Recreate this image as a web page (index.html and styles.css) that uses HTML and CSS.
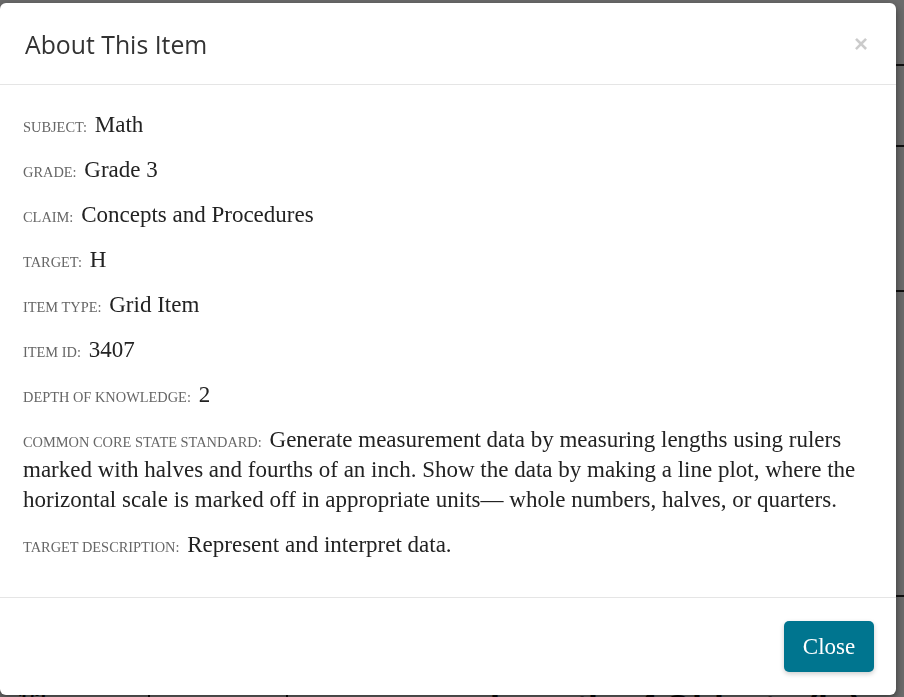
FILE: index.html
```html
<!DOCTYPE html>
<html lang="en">
<head>
<meta charset="utf-8">
<title>About This Item</title>
<link rel="stylesheet" href="styles.css">
</head>
<body>
<div class="page">
  <div class="page-rule r1"></div>
  <div class="page-rule r2"></div>
  <div class="page-rule r3"></div>
  <div class="page-rule r4"></div>
  <div class="page-bottom">
    <span class="page-cell c1">1/2</span>
    <span class="page-cell c2"></span>
    <span class="page-title">Length of Objects (in)</span>
  </div>
</div>
<div class="overlay"></div>
<div class="modal" role="dialog" aria-labelledby="modal-title">
  <div class="modal-header">
    <h4 class="modal-title" id="modal-title">About This Item</h4>
    <button class="modal-x" type="button" aria-label="Close">&times;</button>
  </div>
  <div class="modal-body">
    <p class="row"><span class="label">Subject:</span> Math</p>
    <p class="row"><span class="label">Grade:</span> Grade 3</p>
    <p class="row"><span class="label">Claim:</span> Concepts and Procedures</p>
    <p class="row"><span class="label">Target:</span> H</p>
    <p class="row"><span class="label">Item Type:</span> Grid Item</p>
    <p class="row"><span class="label">Item ID:</span> 3407</p>
    <p class="row"><span class="label">Depth of Knowledge:</span> 2</p>
    <p class="row"><span class="label">Common Core State Standard:</span> Generate measurement data by measuring lengths using rulers marked with halves and fourths of an inch. Show the data by making a line plot, where the horizontal scale is marked off in appropriate units— whole numbers, halves, or quarters.</p>
    <p class="row"><span class="label">Target Description:</span> Represent and interpret data.</p>
  </div>
  <div class="modal-footer">
    <button class="btn-close" type="button">Close</button>
  </div>
</div>
</body>
</html>
```
FILE: styles.css
```css
* { box-sizing: border-box; }
html, body { margin: 0; padding: 0; }
body {
  width: 904px;
  height: 697px;
  overflow: hidden;
  background: #ffffff;
  font-family: "Liberation Serif", serif;
  position: relative;
}
.page { position: absolute; inset: 0; background: #f4f4f4; }
.page-rule { position: absolute; left: 0; right: 0; height: 2px; background: #222; }
.r1 { top: 64px; }
.r2 { top: 145px; }
.r3 { top: 290px; }
.r4 { top: 595px; }
.page-bottom { position: absolute; left: 0; right: 0; top: 688px; height: 40px; }
.page-cell { position: absolute; top: 0; height: 40px; border-right: 2px solid #111; }
.c1 { left: 0; width: 150px; font: bold 20px "Liberation Sans", sans-serif; padding-left: 18px; color: #111; }
.c2 { left: 150px; width: 138px; }
.page-title { position: absolute; left: 490px; top: 0; font: bold 36px "Liberation Sans", sans-serif; color: #111; }
.overlay { position: fixed; inset: 0; background: rgba(0, 0, 0, 0.56); }

.modal {
  position: fixed;
  left: 0;
  top: 3px;
  width: 896px;
  background: #fff;
  border-radius: 6px;
  box-shadow: 0 3px 9px rgba(0, 0, 0, 0.5);
  display: flex;
  flex-direction: column;
}
.modal-header {
  height: 82px;
  border-bottom: 1px solid #e5e5e5;
  display: flex;
  align-items: center;
  justify-content: space-between;
  padding: 0 28px 0 25px;
}
.modal-title {
  margin: 0;
  font-family: "Open Sans", sans-serif;
  font-weight: 400;
  font-size: 24.8px;
  color: #333;
  line-height: 1;
  padding-top: 2px;
}
.modal-x {
  background: none;
  border: 0;
  padding: 0;
  font-family: "Liberation Sans", sans-serif;
  font-size: 24px;
  font-weight: 700;
  color: #000;
  opacity: 0.2;
  line-height: 1;
  cursor: pointer;
}
.modal-body {
  padding: 25px 23px 22px;
  border-bottom: 1px solid #e5e5e5;
}
.row {
  margin: 0 0 15px;
  font-size: 23px;
  line-height: 30px;
  color: #222;
}
.label {
  text-transform: uppercase;
  font-size: 14.4px;
  line-height: 1;
  color: #666;
  margin-right: 2px;
}
.modal-footer {
  padding: 23px 22px 23px;
  display: flex;
  justify-content: flex-end;
}
.btn-close {
  width: 90px;
  height: 51px;
  background: #00758f;
  color: #fff;
  border: 0;
  border-radius: 5px;
  font-family: "Liberation Serif", serif;
  font-size: 23px;
  box-shadow: 0 2px 5px rgba(0, 0, 0, 0.2);
  cursor: pointer;
}
```
